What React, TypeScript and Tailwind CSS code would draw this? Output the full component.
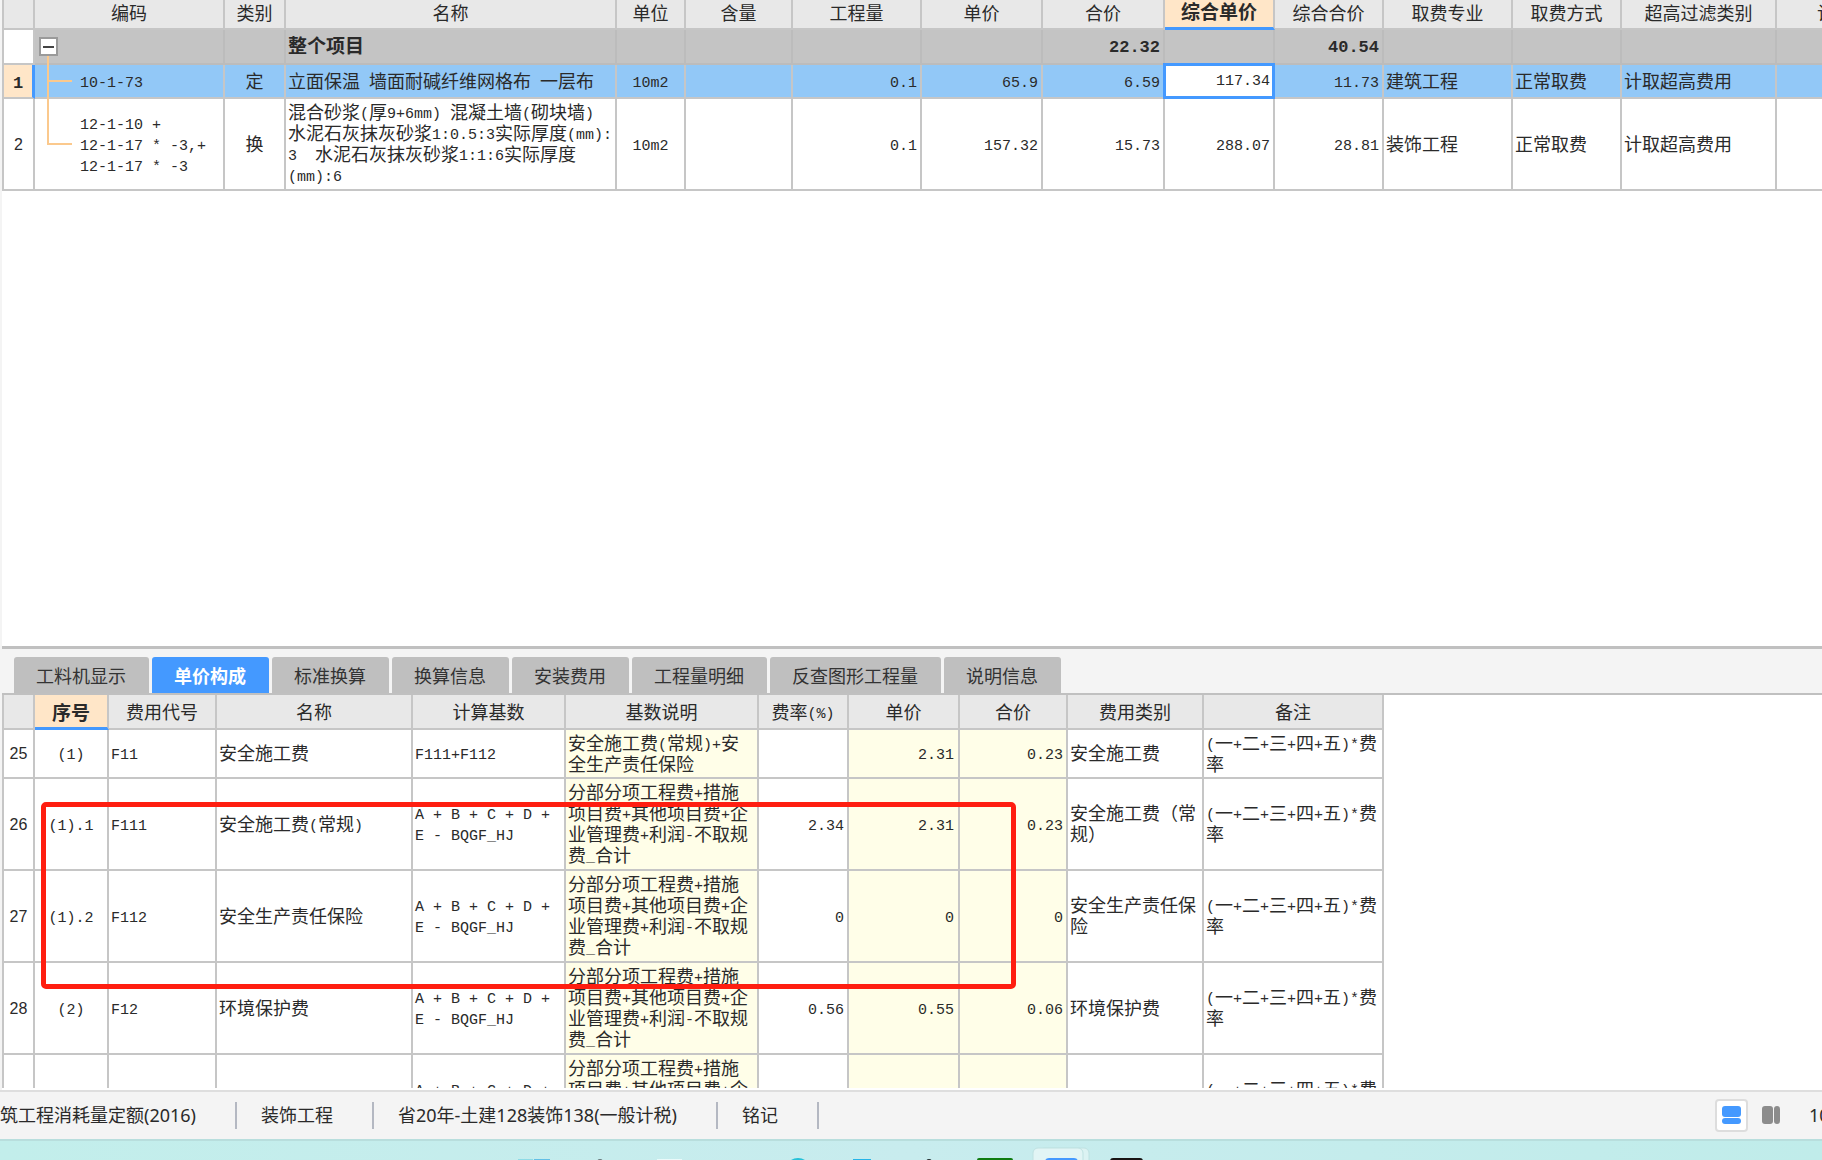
import React from "react";

const SONG = "font-['Noto_Sans_CJK_SC',sans-serif]";

/* Full-width glyphs take 18px, half-width ones are monospaced at 9px. */
function T({ children, bold = false }: { children: string; bold?: boolean }) {
  const parts = children.match(/[\x20-\x7e]+|[^\x20-\x7e]+/g) ?? [];
  return (
    <div
      className={
        bold
          ? "whitespace-pre font-['Noto_Sans_CJK_SC',sans-serif] text-[19px] leading-[21px] font-bold"
          : "whitespace-pre font-['Noto_Sans_CJK_SC',sans-serif] text-[18px] leading-[21px]"
      }
    >
      {parts.map((p, i) =>
        /[\x20-\x7e]/.test(p) ? (
          <span
            key={i}
            className={
              bold
                ? "align-[1px] font-['Liberation_Mono',monospace] text-[17px] leading-[12px]"
                : "align-[1px] font-['Liberation_Mono',monospace] text-[15px] leading-[12px]"
            }
          >
            {p}
          </span>
        ) : (
          <React.Fragment key={i}>{p}</React.Fragment>
        ),
      )}
    </div>
  );
}

const LINE = "border-r-2 border-b-2 border-[#c6c6c6]";

const topWidths = [31, 190, 61, 331, 69, 107, 129, 121, 122, 110, 109, 129, 109, 155, 154];
const topHeads = ["", "编码", "类别", "名称", "单位", "含量", "工程量", "单价", "合价", "综合单价", "综合合价", "取费专业", "取费方式", "超高过滤类别", "计算基数"];

type TopRow = { no: string; sel: boolean; cells: string[] };
const topRows: TopRow[] = [
  {
    no: "1",
    sel: true,
    cells: ["10-1-73", "定", "立面保温 墙面耐碱纤维网格布 一层布", "10m2", "", "0.1", "65.9", "6.59", "117.34", "11.73", "建筑工程", "正常取费", "计取超高费用", ""],
  },
  {
    no: "2",
    sel: false,
    cells: [
      "12-1-10 +\n12-1-17 * -3,+\n12-1-17 * -3",
      "换",
      "混合砂浆(厚9+6mm) 混凝土墙(砌块墙)\n水泥石灰抹灰砂浆1:0.5:3实际厚度(mm):\n3  水泥石灰抹灰砂浆1:1:6实际厚度\n(mm):6",
      "10m2", "", "0.1", "157.32", "15.73", "288.07", "28.81", "装饰工程", "正常取费", "计取超高费用", "",
    ],
  },
];

function align(i: number) {
  if (i === 1 || i === 3) return "text-center";
  if (i >= 4 && i <= 9) return "text-right pr-[3px]";
  return "text-left pl-[2px]";
}

function QuotaTable() {
  return (
    <table className="w-full min-w-[1929px] table-fixed border-separate border-spacing-0 border-l-2 border-[#c6c6c6] leading-[21px]">
      <colgroup>
        {topWidths.map((w, i) => (
          <col key={i} style={{ width: w }} />
        ))}
      </colgroup>
      <thead>
        <tr className="h-[30px]">
          {topHeads.map((h, i) =>
            i === 9 ? (
              <th key={i} className="border-r-2 border-b-3 border-[#c6c6c6] border-b-[#4499ff] bg-[#ffe6c8] p-0 pb-[6px]">
                <T bold>{h}</T>
              </th>
            ) : (
              <th key={i} className={`${LINE} bg-[#e8e8e8] p-0 pb-[4px] font-normal`}>
                <T>{h}</T>
              </th>
            ),
          )}
        </tr>
      </thead>
      <tbody>
        <tr className="h-[35px]">
          <td className={`${LINE} bg-white p-0`} />
          {topWidths.slice(1).map((_, i) => (
            <td key={i} className={`relative border-r-2 border-b-2 border-[#bcbcbc] bg-[#c4c4c4] p-0 pb-[4px] ${align(i === 2 ? 2 : 7)}`}>
              {i === 0 && (
                <>
                  <button
                    aria-label="折叠"
                    className="absolute top-[7px] left-[4px] flex size-[19px] items-center justify-center border-2 border-[#9a9a9a] bg-white"
                  >
                    <span className="h-[2px] w-[11px] bg-[#444]" />
                  </button>
                  <span className="absolute top-[26px] -bottom-[2px] left-[12px] w-[2px] bg-[#fbc98d]" />
                </>
              )}
              {i === 2 && <T bold>整个项目</T>}
              {i === 7 && <T bold>22.32</T>}
              {i === 9 && <T bold>40.54</T>}
            </td>
          ))}
        </tr>
        {topRows.map((r) => (
          <tr key={r.no} className={r.sel ? "h-[34px] bg-[#92c8f7]" : "h-[92px] bg-white"}>
            {r.sel ? (
              <th className="border-r-3 border-b-2 border-[#c6c6c6] border-r-[#4499ff] bg-[#ffe6c8] p-0 pb-[2px]">
                <T bold>{r.no}</T>
              </th>
            ) : (
              <th className={`${LINE} p-0 font-['Liberation_Sans',sans-serif] text-[16px] font-normal`}>{r.no}</th>
            )}
            {r.cells.map((c, i) =>
              r.sel && i === 8 ? (
                <td key={i} className="relative p-0">
                  <input
                    aria-label="综合单价"
                    defaultValue={c}
                    className="absolute -top-[2px] -left-[2px] h-[36px] w-[calc(100%+2px)] border-3 border-[#4499ff] bg-white pr-[2px] text-right font-['Liberation_Mono',monospace] text-[15px] outline-none"
                  />
                </td>
              ) : (
                <td key={i} className={`${LINE} relative p-0 pb-[2px] ${i === 0 ? "pl-[45px]" : align(i)}`}>
                  {i === 0 && (
                    <>
                      <span className={r.sel ? "absolute top-0 -bottom-[2px] left-[12px] w-[2px] bg-[#fbc98d]" : "absolute top-0 bottom-1/2 left-[12px] w-[2px] bg-[#fbc98d]"} />
                      <span className="absolute top-1/2 left-[12px] h-[2px] w-[25px] -translate-y-1/2 bg-[#fbc98d]" />
                    </>
                  )}
                  <T>{c}</T>
                </td>
              ),
            )}
          </tr>
        ))}
      </tbody>
    </table>
  );
}

const tabs = ["工料机显示", "单价构成", "标准换算", "换算信息", "安装费用", "工程量明细", "反查图形工程量", "说明信息"];

const feeWidths = [31, 74, 108, 196, 153, 193, 90, 111, 108, 136, 180];
const feeHeads = ["", "序号", "费用代号", "名称", "计算基数", "基数说明", "费率(%)", "单价", "合价", "费用类别", "备注"];
const BASE = "A + B + C + D +\nE - BQGF_HJ";
const NOTE = "分部分项工程费+措施\n项目费+其他项目费+企\n业管理费+利润-不取规\n费_合计";
const REMARK = "(一+二+三+四+五)*费\n率";
const feeRows: string[][] = [
  ["25", "(1)", "F11", "安全施工费", "F111+F112", "安全施工费(常规)+安\n全生产责任保险", "", "2.31", "0.23", "安全施工费", REMARK],
  ["26", "(1).1", "F111", "安全施工费(常规)", BASE, NOTE, "2.34", "2.31", "0.23", "安全施工费（常\n规）", REMARK],
  ["27", "(1).2", "F112", "安全生产责任保险", BASE, NOTE, "0", "0", "0", "安全生产责任保\n险", REMARK],
  ["28", "(2)", "F12", "环境保护费", BASE, NOTE, "0.56", "0.55", "0.06", "环境保护费", REMARK],
  ["", "", "", "", BASE, NOTE, "", "", "", "", REMARK],
];

function feeAlign(i: number) {
  if (i === 1) return "text-center";
  if (i === 6 || i === 8) return "text-right pr-[3px]";
  if (i === 7) return "text-right pr-[4px]";
  return "text-left pl-[2px]";
}

function FeeTable() {
  return (
    <table className="w-[1382px] table-fixed border-separate border-spacing-0 border-l-2 border-[#c6c6c6] leading-[21px]">
      <colgroup>
        {feeWidths.map((w, i) => (
          <col key={i} style={{ width: w }} />
        ))}
      </colgroup>
      <thead>
        <tr className="h-[35px]">
          {feeHeads.map((h, i) =>
            i === 1 ? (
              <th key={i} className="border-r-2 border-b-3 border-[#c6c6c6] border-b-[#4499ff] bg-[#ffe6c8] p-0">
                <T bold>{h}</T>
              </th>
            ) : (
              <th key={i} className={`${LINE} bg-[#e8e8e8] p-0 font-normal`}>
                <T>{h}</T>
              </th>
            ),
          )}
        </tr>
      </thead>
      <tbody>
        {feeRows.map((r, n) => (
          <tr key={n} className={n === 0 ? "h-[49px]" : "h-[92px]"}>
            {r.map((c, i) =>
              i === 0 ? (
                <th key={i} className={`${LINE} p-0 font-['Liberation_Sans',sans-serif] text-[16px] font-normal`}>{c}</th>
              ) : (
                <td key={i} className={`${LINE} p-0 pb-[2px] ${feeAlign(i)} ${i === 5 || i === 7 || i === 8 ? "bg-[#fffee8]" : "bg-white"}`}>
                  <T>{c}</T>
                </td>
              ),
            )}
          </tr>
        ))}
      </tbody>
    </table>
  );
}

function StatusBar() {
  return (
    <footer className="flex h-[49px] shrink-0 items-center overflow-hidden border-t-2 border-[#dedede] bg-[#f4f4f4] font-['Noto_Sans','Noto_Sans_CJK_SC',sans-serif] text-[18px] whitespace-nowrap">
      {["筑工程消耗量定额(2016)", "装饰工程", "省20年-土建128装饰138(一般计税)", "铭记"].map((s, i) => (
        <span key={s} className={`flex h-[27px] items-center border-r-2 border-[#b4b8c2] pr-[39px] ${i ? "pl-6" : ""}`}>
          {s}
        </span>
      ))}
      <div className="ml-auto flex items-center">
        <button aria-label="上下布局" className="flex size-[33px] items-center justify-center rounded-[4px] border-2 border-[#dddddd] bg-white">
          <svg width="19" height="19" viewBox="0 0 19 19" fill="#4499ff">
            <rect x="0" y="0" width="19" height="11" rx="3" />
            <rect x="0" y="12" width="19" height="6" rx="3" />
          </svg>
        </button>
        <button aria-label="左右布局" className="mr-[28px] ml-[14px]">
          <svg width="19" height="19" viewBox="0 0 19 19" fill="#8c8c8c">
            <rect x="0" y="0" width="11" height="18" rx="3" />
            <rect x="12" y="0" width="6" height="18" rx="3" />
          </svg>
        </button>
        <span className="w-[13px] overflow-hidden">100%</span>
      </div>
    </footer>
  );
}

function Taskbar() {
  return (
    <div className="h-[21px] shrink-0 overflow-hidden border-t-2 border-[#b8dedd] bg-linear-to-r from-[#c2eeeb] via-[#c8ecee] to-[#c0ecea]">
      <svg width="700" height="19" viewBox="480 1141 700 19" className="ml-[480px]">
        <rect x="518" y="1159" width="15" height="6" fill="#8edbe6" />
        <rect x="534" y="1159" width="16" height="6" fill="#62bfe6" />
        <circle cx="600" cy="1162" r="3" fill="#68777a" />
        <rect x="657" y="1159" width="25" height="6" fill="#eafafa" />
        <circle cx="798" cy="1171" r="13" fill="#25c1d8" />
        <rect x="853" y="1159" width="18" height="6" fill="#25b4e8" />
        <circle cx="929" cy="1162" r="3" fill="#202a2c" />
        <rect x="977" y="1158" width="36" height="10" rx="2" fill="#107c10" />
        <rect x="1040" y="1148" width="49" height="30" rx="5" fill="#dcf3f3" stroke="#bfe2e2" />
        <rect x="1033" y="1148" width="50" height="30" rx="5" fill="#e2f5f5" stroke="#bfe2e2" />
        <rect x="1045" y="1158" width="33" height="10" rx="4" fill="#4499ff" />
        <rect x="1110" y="1158" width="33" height="10" rx="3" fill="#181414" />
      </svg>
    </div>
  );
}

export default function App() {
  return (
    <div className={`flex h-screen flex-col overflow-hidden bg-white ${SONG} text-[#2a2a2a]`}>
      <div className="flex min-h-0 flex-1 flex-col border-l-2 border-[#f4f4f4]">
        <section className="min-h-0 flex-1 overflow-hidden">
          <QuotaTable />
        </section>
        <div className="h-[3px] shrink-0 bg-[#c0c0c0]" />
        <nav className="flex h-[46px] shrink-0 gap-[3px] border-b-2 border-[#c0c0c0] bg-[#f4f4f4] pt-[8px] pl-[12px]">
          {tabs.map((t, i) => (
            <button
              key={t}
              className={
                i === 1
                  ? "rounded-t-[3px] bg-[#4499ff] pr-[23px] pl-[22px] text-[18px] font-bold text-white"
                  : "rounded-t-[3px] bg-[#bfbfbf] pr-[23px] pl-[22px] text-[18px] text-[#333]"
              }
            >
              {t}
            </button>
          ))}
        </nav>
        <section className="relative mb-[2px] h-[393px] shrink-0 overflow-hidden">
          <FeeTable />
          <div className="absolute top-[107px] left-[39px] h-[187px] w-[975px] rounded-[5px] border-5 border-[#ff1e10]" />
        </section>
      </div>
      <StatusBar />
      <Taskbar />
    </div>
  );
}
